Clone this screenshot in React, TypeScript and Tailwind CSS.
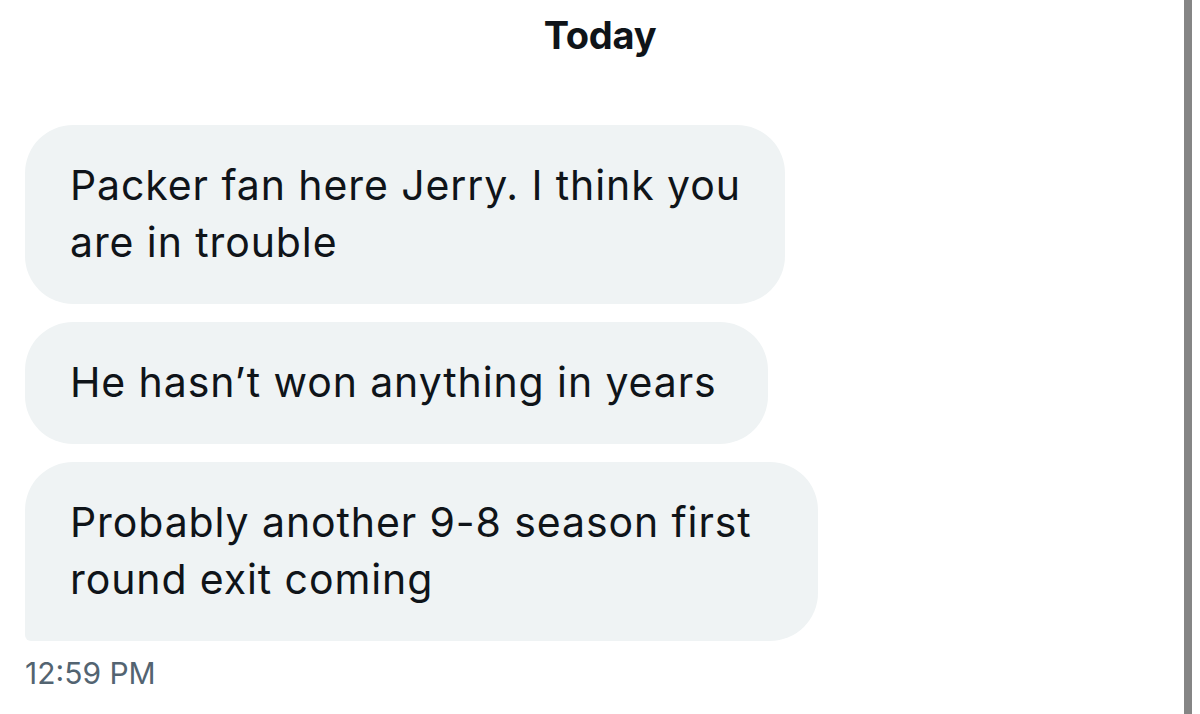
const messages: { lines: string[]; width: string; tail?: boolean }[] = [
  { lines: ["Packer fan here Jerry. I think you", "are in trouble"], width: "w-[760px]" },
  { lines: ["He hasn’t won anything in years"], width: "w-[743px]" },
  { lines: ["Probably another 9-8 season first", "round exit coming"], width: "w-[793px]", tail: true },
];

const Bubble = ({ lines, width, tail }: { lines: string[]; width: string; tail?: boolean }) => {
  return (
    <div
      className={`${width} bg-[#eff3f4] text-[#0f1419] text-[41px] leading-[57px] tracking-[0.9px] pt-[32px] pb-[33px] pl-[45px] ${
        tail ? "rounded-[48px] rounded-bl-[6px]" : "rounded-[48px]"
      }`}
    >
      {lines.map((l, i) => (
        <div key={i} className="whitespace-nowrap">
          {l}
        </div>
      ))}
    </div>
  );
};

export default function App() {
  return (
    <div className="relative h-[714px] w-full overflow-hidden bg-white font-['Inter',sans-serif]">
      <div className="pt-[12px] text-center text-[38px] font-bold leading-[46px] text-[#0f1419] tracking-[-0.3px]">
        Today
      </div>
      <div className="mt-[67px] flex flex-col gap-[18px] pl-[25px]">
        {messages.map((m, i) => (
          <Bubble key={i} {...m} />
        ))}
      </div>
      <div className="mt-[12px] pl-[25px] text-[30px] leading-[40px] text-[#536471]">12:59 PM</div>
      {/* scrollbar */}
      <div className="absolute right-[8px] top-0 h-full w-[8px] bg-[#858585]" />
    </div>
  );
}
